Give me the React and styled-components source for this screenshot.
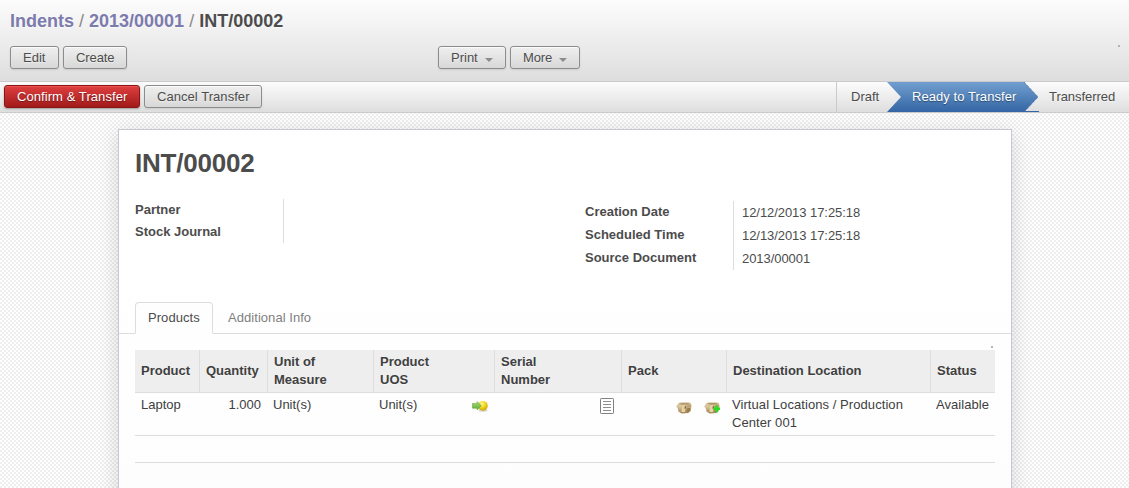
import React from "react";
import styled, { createGlobalStyle, css } from "styled-components";

const Global = createGlobalStyle`
  * { box-sizing: border-box; }
  body {
    margin: 0;
    height: 488px;
    overflow: hidden;
    font: 13px/18px "Liberation Sans", Arial, sans-serif;
    color: #4c4c4c;
    background: repeating-conic-gradient(#eeeeee 0 25%, #ffffff 0 50%) 0 0 / 4px 4px;
    text-shadow: 0 1px 1px rgba(255, 255, 255, 0.5);
  }
`;

const Header = styled.header`
  position: relative;
  height: 82px;
  padding: 10px 10px 0;
  background: linear-gradient(#fcfcfc, #dedede);
  border-bottom: 1px solid #cacaca;
`;

const Breadcrumb = styled.h2`
  margin: 0 0 14px;
  font-size: 18px;
  line-height: 22px;
  font-weight: bold;
  white-space: pre;
`;
const Crumb = styled.a`
  color: #7c7bad;
`;
const Slash = styled.span`
  color: #888;
  font-weight: normal;
`;

const Controls = styled.div`
  display: grid;
  grid-template-columns: 428px 1fr;
`;
const ButtonGroup = styled.div`
  display: flex;
  gap: 4px;
`;

const Button = styled.button`
  display: flex;
  align-items: center;
  height: 23px;
  width: ${(p) => p.$w}px;
  padding: 1px 0 0 12px;
  font: inherit;
  letter-spacing: ${(p) => p.$track || 0}px;
  color: #4c4c4c;
  white-space: nowrap;
  border: 1px solid #8c8c8c;
  border-radius: 3px;
  background: linear-gradient(#efefef, #d8d8d8);
  box-shadow: 0 1px 2px rgba(0, 0, 0, 0.1), inset 0 1px 1px rgba(255, 255, 255, 0.8);
  text-shadow: 0 1px 1px rgba(255, 255, 255, 0.5);
  ${(p) =>
    p.$primary &&
    css`
      color: #fff;
      border-color: #8a1414;
      background: linear-gradient(#df3f3f, #a21a1a);
      box-shadow: 0 1px 2px rgba(0, 0, 0, 0.3), inset 0 1px 1px rgba(255, 120, 120, 0.4);
      text-shadow: 0 1px 1px rgba(0, 0, 0, 0.4);
    `}
`;
const Caret = styled.span`
  margin: 3px 0 0 7px;
  border: 4px solid transparent;
  border-top-color: #8c8c8c;
  border-bottom: 0;
`;

const Speck = styled.i`
  position: absolute;
  top: ${(p) => p.$top}px;
  right: ${(p) => p.$right}px;
  width: 2px;
  height: 2px;
  background: #b5b5b5;
`;

const StatusBar = styled.div`
  display: flex;
  justify-content: space-between;
  height: 31px;
  background: linear-gradient(#fcfcfc, #dedede);
  border-bottom: 1px solid #cacaca;
`;
const Actions = styled(ButtonGroup)`
  padding: 3px 0 0 4px;
`;
const Steps = styled.div`
  display: flex;
  width: 293px;
  border-left: 1px solid #cacaca;
  line-height: 30px;
`;
const Step = styled.div`
  position: relative;
  width: ${(p) => p.$w}px;
  padding-left: ${(p) => p.$pad}px;
  letter-spacing: ${(p) => p.$track || 0}px;
  white-space: nowrap;
  ${(p) =>
    p.$active &&
    css`
      color: #fff;
      background: linear-gradient(#729fcf, #3465a4);
      text-shadow: 0 1px 1px rgba(0, 0, 0, 0.4);
    `}
`;
const Arrow = styled.svg`
  position: absolute;
  top: 0;
  left: ${(p) => p.$left}px;
`;

const Sheet = styled.main`
  position: relative;
  width: 894px;
  height: 380px;
  margin: 16px 0 0 118px;
  padding: 18px 0 0;
  background: linear-gradient(#ffffff 35%, #fdfdfd);
  border: 1px solid #c8c8d3;
  box-shadow: 0 4px 20px rgba(0, 0, 0, 0.15);
`;
const Title = styled.h1`
  margin: 0 16px 21px;
  font-size: 26px;
  line-height: 30px;
  letter-spacing: -0.22px;
`;
const Fields = styled.div`
  display: grid;
  grid-template-columns: 450px 1fr;
  align-items: start;
  height: 103px;
  padding: 0 16px;
`;
const FieldGroup = styled.div`
  display: grid;
  grid-template-columns: 149px 1fr;
  margin-top: ${(p) => p.$top || 0}px;
  line-height: ${(p) => p.$row}px;
`;
const Labels = styled.div`
  border-right: 1px solid #dddddd;
  font-weight: bold;
  div { margin-top: ${(p) => p.$lift || 0}px; margin-bottom: ${(p) => -(p.$lift || 0)}px; }
`;
const Values = styled.div`
  padding-left: 8px;
  letter-spacing: -0.06px;
`;

const Tabs = styled.nav`
  display: flex;
  height: 32px;
  padding-left: 16px;
  border-bottom: 1px solid #dddddd;
`;
const Tab = styled.div`
  width: ${(p) => p.$w}px;
  height: 32px;
  padding: 6px 0 0 12px;
  margin-right: 2px;
  border: 1px solid transparent;
  letter-spacing: 0.05px;
  color: #808080;
  ${(p) =>
    p.$active &&
    css`
      color: #4c4c4c;
      background: #fefefe;
      border-color: #dddddd;
      border-bottom-color: #fefefe;
      border-radius: 4px 4px 0 0;
    `}
`;

const Table = styled.table`
  width: 860px;
  margin: 16px 0 0 16px;
  table-layout: fixed;
  border-spacing: 0;
  tr.blank td { height: 27px; }
`;
const Th = styled.th`
  height: 43px;
  padding: 3px 6px;
  text-align: left;
  color: #404040;
  background: #eeeeee;
  border-bottom: 1px solid #dddddd;
  & + & { border-left: 1px solid #dddddd; }
`;
const Td = styled.td`
  padding: 3px 6px;
  vertical-align: top;
  text-align: ${(p) => p.$align || "left"};
  letter-spacing: ${(p) => p.$track || 0}px;
  color: #404040;
  border-bottom: 1px solid #dddddd;
`;
const CellRow = styled.div`
  display: flex;
  gap: 12px;
  justify-content: ${(p) => (p.$end ? "flex-end" : "space-between")};
  padding-right: ${(p) => p.$inset || 0}px;
  svg { flex: none; margin-top: ${(p) => p.$drop || 2}px; }
`;

const ConsumeIcon = () => (
  <svg width="16" height="16" viewBox="0 0 16 16">
    <defs>
      <radialGradient id="ball" cx=".4" cy=".3" r=".75">
        <stop offset="0" stopColor="#fff79a" />
        <stop offset=".45" stopColor="#f5da24" />
        <stop offset="1" stopColor="#c79d06" />
      </radialGradient>
      <linearGradient id="leaf" x2="0" y2="1">
        <stop offset="0" stopColor="#a9dc70" />
        <stop offset="1" stopColor="#5aab35" />
      </linearGradient>
    </defs>
    <ellipse cx="11" cy="12.6" rx="4.5" ry="1.4" fill="#000" opacity=".15" />
    <circle cx="10.8" cy="7.8" r="4.9" fill="url(#ball)" />
    <path d="M.5 5.4h4.6V3.6L9.2 7.8l-4.1 4.2v-1.8H.5z" fill="url(#leaf)" stroke="#62a83f" strokeWidth=".6" />
  </svg>
);

const ListIcon = () => (
  <svg width="14" height="16" viewBox="0 0 14 16">
    <rect x=".5" y=".5" width="13" height="15" rx=".7" fill="#fff" stroke="#808080" />
    <path d="M3 3.5h8M3 6.5h8M3 9.5h8M3 12.5h8" stroke="#8d8d8d" />
  </svg>
);

const PackIcon = ({ add }) => (
  <svg width="16" height="16" viewBox="0 0 16 16">
    <defs>
      <linearGradient id="box" x2="0" y2="1">
        <stop offset="0" stopColor="#dccba6" />
        <stop offset=".5" stopColor="#cfb68a" />
        <stop offset="1" stopColor="#a08052" />
      </linearGradient>
    </defs>
    <path d="M2.6 2.9 5 2.2h7.4l2.4.8.8 2.8-.3 1.8-.6 3.4-2.6 2.1-6.2.4-3.3-1.7L1.6 8 .3 6.5z" fill="url(#box)" />
    <path d="M3 3.6 5.3 3h6.9l1.8.7-2.8 1H5.8z" fill="#b39a6e" />
    <path d="m.5 6.4 2.1-2.2 3 .9-.7 2.7z" fill="#d9c69c" />
    <path d="m10.8 5.2 3.6-1 .9 2.3-4 1.4z" fill="#bba172" />
    <path d="M5.9 5.3H9v6.7H5.5z" fill="#e3d2aa" />
    <path d="M9 6h1.2v2.6H8.2z" fill="#8d6c3d" />
    <path d="m10.6 8.6 4-1-.5 3.2-2.4 1.8h-1.1z" fill="#9c7b4a" />
    {add && <path d="M11.4 5.4h2.4v2.2H16v2.5h-2.2v2.3h-2.4v-2.3H9.6V7.6h1.8z" fill="#2bdc22" />}
  </svg>
);

const widths = [64, 68, 106, 121, 127, 105, 204, 65];

export default function App() {
  return (
    <>
      <Global />
      <Header>
        <Breadcrumb>
          <Crumb>Indents</Crumb>
          <Slash> / </Slash>
          <Crumb>2013/00001</Crumb>
          <Slash> / </Slash>
          <span>INT/00002</span>
        </Breadcrumb>
        <Controls>
          <ButtonGroup>
            <Button $w={49}>Edit</Button>
            <Button $w={64} $track={-0.1}>Create</Button>
          </ButtonGroup>
          <ButtonGroup>
            <Button $w={68}>Print<Caret /></Button>
            <Button $w={70} $track={-0.15}>More<Caret /></Button>
          </ButtonGroup>
        </Controls>
        <Speck $top={45} $right={9} />
      </Header>
      <StatusBar>
        <Actions>
          <Button $w={136} $track={0.07} $primary>Confirm &amp; Transfer</Button>
          <Button $w={118} $track={0.05}>Cancel Transfer</Button>
        </Actions>
        <Steps>
          <Step $w={50} $pad={14}>Draft</Step>
          <Step $w={137} $pad={25} $track={0.06} $active>
            <Arrow $left={0} width="15" height="30" viewBox="0 0 15 30">
              <defs>
                <linearGradient id="pale" x2="0" y2="1">
                  <stop offset="0" stopColor="#fcfcfc" />
                  <stop offset="1" stopColor="#dedede" />
                </linearGradient>
              </defs>
              <path d="M0 0 14 15 0 30z" fill="url(#pale)" />
            </Arrow>
            Ready to Transfer
          </Step>
          <Step $w={105} $pad={25} $track={-0.06}>
            <Arrow $left={-1} width="16" height="30" viewBox="0 0 16 30">
              <defs>
                <linearGradient id="blue" x2="0" y2="1">
                  <stop offset="0" stopColor="#729fcf" />
                  <stop offset="1" stopColor="#3465a4" />
                </linearGradient>
              </defs>
              <path d="M0 0h1l14 15L1 30H0z" fill="url(#blue)" />
              <path d="m1 0 14 15L1 30" fill="none" stroke="#3465a4" strokeDasharray="1 1" />
              <path d="M0 29.5h16" stroke="#3465a4" />
            </Arrow>
            Transferred
          </Step>
        </Steps>
      </StatusBar>
      <Sheet>
        <Title>INT/00002</Title>
        <Fields>
          <FieldGroup $row={22}>
            <Labels>
              <div>Partner</div>
              <div>Stock Journal</div>
            </Labels>
          </FieldGroup>
          <FieldGroup $row={23} $top={2}>
            <Labels $lift={-1}>
              <div>Creation Date</div>
              <div>Scheduled Time</div>
              <div>Source Document</div>
            </Labels>
            <Values>
              <div>12/12/2013 17:25:18</div>
              <div>12/13/2013 17:25:18</div>
              <div>2013/00001</div>
            </Values>
          </FieldGroup>
        </Fields>
        <Tabs>
          <Tab $w={78} $active>Products</Tab>
          <Tab $w={110}>Additional Info</Tab>
        </Tabs>
        <Speck $top={216} $right={18} />
        <Table>
          <colgroup>
            {widths.map((w, i) => <col key={i} width={w} />)}
          </colgroup>
          <thead>
            <tr>
              <Th>Product</Th>
              <Th>Quantity</Th>
              <Th>Unit of<br />Measure</Th>
              <Th>Product<br />UOS</Th>
              <Th>Serial<br />Number</Th>
              <Th>Pack</Th>
              <Th>Destination Location</Th>
              <Th>Status</Th>
            </tr>
          </thead>
          <tbody>
            <tr>
              <Td>Laptop</Td>
              <Td $align="right">1.000</Td>
              <Td>Unit(s)</Td>
              <Td><CellRow>Unit(s)<ConsumeIcon /></CellRow></Td>
              <Td><CellRow $end $inset={1}><ListIcon /></CellRow></Td>
              <Td><CellRow $end $drop={4}><PackIcon /><PackIcon add /></CellRow></Td>
              <Td $track={0.07}>Virtual Locations / Production Center 001</Td>
              <Td $track={0.05}>Available</Td>
            </tr>
            <tr className="blank"><Td colSpan={8} /></tr>
          </tbody>
        </Table>
      </Sheet>
    </>
  );
}
